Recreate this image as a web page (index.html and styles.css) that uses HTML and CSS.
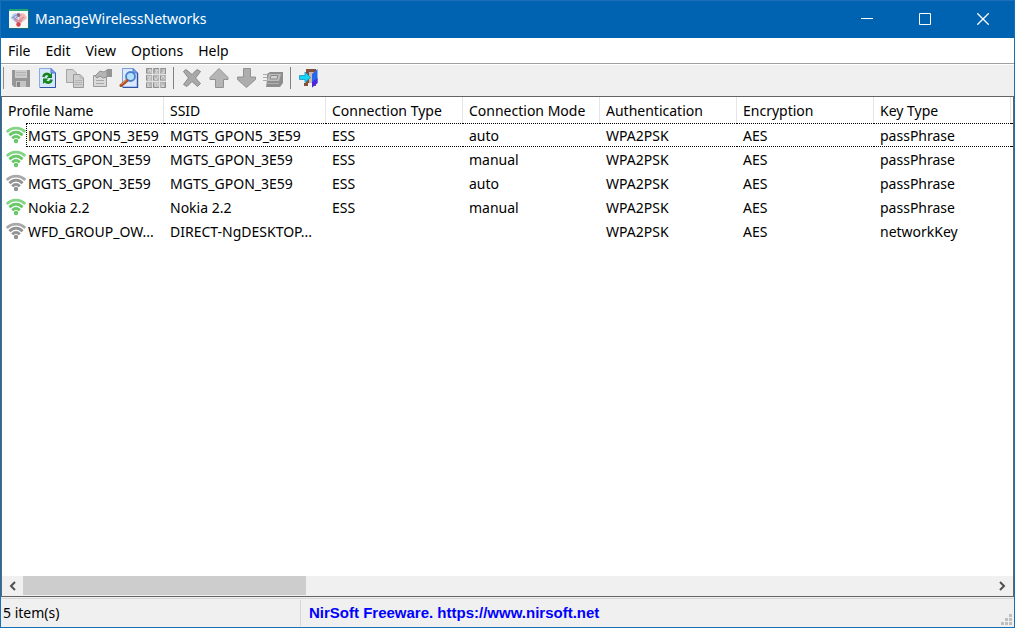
FILE: index.html
```html
<!DOCTYPE html>
<html lang="en">
<head>
    <meta charset="UTF-8">
    <meta name="viewport" content="width=device-width, initial-scale=1.0">
    <title>ManageWirelessNetworks</title>
    <link rel="stylesheet" href="styles.css">
</head>
<body>
    <!-- Shared signal icon, coloured by the row -->
    <svg class="defs" aria-hidden="true">
        <symbol id="wifi" viewBox="0 0 20 18">
            <g fill="none" stroke="currentColor" stroke-width="2.8">
                <path d="M0.8 6C6 0.8 14 0.8 19.2 6" opacity="0.8"/>
                <path d="M3.4 9.2C7.4 5.2 12.6 5.2 16.6 9.2"/>
                <path d="M6.2 12.4C8.6 9.8 11.4 9.8 13.8 12.4"/>
            </g>
            <circle cx="10" cy="15" r="2.2" fill="currentColor"/>
        </symbol>
    </svg>

    <div class="window">
        <header class="titlebar">
            <svg class="app-icon" width="20" height="20" viewBox="0 0 20 20">
                <rect width="20" height="20" fill="#1f6f70"/>
                <rect width="19" height="2" fill="#22a878"/>
                <rect y="2" width="19" height="17" fill="#f6f8f8"/>
                <path d="M1.5 9L4 5L7 4L9.5 7V16L5 12Z" fill="#b9cdf0"/>
                <path d="M18 9L15.500 5L12.500 4L10 7V16L14.500 12Z" fill="#f3b7b0"/>
                <path d="M4 8L9.500 12L15 8M6 11L9.500 14L13 11" fill="none" stroke="#d98a96" stroke-width="1.2"/>
                <path d="M3 9L7 6M5 11L8 8" stroke="#7d98d6"/>
                <circle cx="9.5" cy="6" r="2" fill="#8c6a80"/>
                <circle cx="9.5" cy="15.5" r="2.2" fill="#d8434a"/>
            </svg>
            <h1>ManageWirelessNetworks</h1>
            <div class="window-buttons">
                <button type="button" aria-label="Minimize">
                    <svg width="12" height="12" viewBox="0 0 12 12"><path d="M0 5.5H12"/></svg>
                </button>
                <button type="button" aria-label="Maximize">
                    <svg width="12" height="12" viewBox="0 0 12 12"><path d="M0.5 0.5H11.5V11.5H0.5Z"/></svg>
                </button>
                <button type="button" aria-label="Close">
                    <svg width="12" height="12" viewBox="0 0 12 12"><path d="M0.3 0.3L11.7 11.7M11.7 0.3L0.3 11.7" stroke-width="1.3"/></svg>
                </button>
            </div>
        </header>

        <nav class="menubar">
            <button type="button">File</button>
            <button type="button">Edit</button>
            <button type="button">View</button>
            <button type="button">Options</button>
            <button type="button">Help</button>
        </nav>

        <div class="toolbar" role="toolbar">
            <button type="button" aria-label="Save" disabled>
                <svg width="20" height="20" viewBox="0 0 20 20">
                    <path d="M1 2H19V19H3L1 17Z" fill="#969696"/>
                    <path d="M4 2H16V10H4Z" fill="#cdcdcd"/>
                    <path d="M5 4.5H15M5 7H15" stroke="#b2b2b2"/>
                    <path d="M5 13H15V19H5Z" fill="#c4c4c4"/>
                    <path d="M6 14H9V19H6Z" fill="#858585"/>
                </svg>
            </button>
            <button type="button" aria-label="Refresh">
                <svg width="20" height="20" viewBox="0 0 20 20">
                    <path d="M1.5 0.5H13L17.5 5V19.5H1.5Z" fill="#d6e6fd" stroke="#8aaae6"/>
                    <path d="M17.5 5V19.5H2" fill="none" stroke="#2f55a8"/>
                    <path d="M13 0.5V5H17.5Z" fill="#7da6eb" stroke="#4f7aca"/>
                    <path d="M5.5 9C6 5.5 9.5 5 12 7.500" fill="none" stroke="#13851a" stroke-width="2.6"/>
                    <path d="M14 4.500V10H8.500Z" fill="#13851a"/>
                    <path d="M13.500 11.500C13 15 9.500 15.500 7 13" fill="none" stroke="#13851a" stroke-width="2.6"/>
                    <path d="M5 16V10.500H10.500Z" fill="#13851a"/>
                </svg>
            </button>
            <button type="button" aria-label="Copy" disabled>
                <svg width="20" height="20" viewBox="0 0 20 20">
                    <path d="M1.5 1.5H8L11.5 5V14.5H1.5Z" fill="#d2d2d2" stroke="#a3a3a3"/>
                    <path d="M8.5 6.5H15L18.5 10V19.5H8.5Z" fill="#cfcfcf" stroke="#999"/>
                    <path d="M15 6.5V10H18.5M10 12.5H17M10 14.5H17M10 16.5H17" fill="none" stroke="#b4b4b4"/>
                </svg>
            </button>
            <button type="button" aria-label="Properties" disabled>
                <svg width="20" height="20" viewBox="0 0 20 20">
                    <path d="M1.5 7.5H14.5V18.5H1.5Z" fill="#dadada" stroke="#999"/>
                    <path d="M4 12.5H12M4 15.5H12" stroke="#a6a6a6"/>
                    <path d="M3 8L8 3L12 4L15 2V9L11 10L8 8L5 10Z" fill="#b5b5b5" stroke="#929292"/>
                    <path d="M15 1H20V9H15Z" fill="#959595"/>
                </svg>
            </button>
            <button type="button" aria-label="Find">
                <svg width="20" height="20" viewBox="0 0 20 20">
                    <path d="M3.5 0.5H14L18.5 5V19.5H3.5Z" fill="#dbe9fd" stroke="#789de0"/>
                    <path d="M18.5 5V19.5H4" fill="none" stroke="#2b52a8" stroke-width="1.4"/>
                    <path d="M14 0.5V5H18.5Z" fill="#7da6eb" stroke="#4f7aca"/>
                    <circle cx="11.5" cy="8.5" r="4.5" fill="#b4e2fb" stroke="#4c7ccc" stroke-width="1.8"/>
                    <path d="M8 12.5L2 17.5" stroke="#a84e22" stroke-width="3" stroke-linecap="round"/>
                    <path d="M7.5 12L2 16.5" stroke="#ef9b57"/>
                </svg>
            </button>
            <button type="button" aria-label="Advanced options" disabled>
                <svg width="20" height="20" viewBox="0 0 20 20">
                    <path d="M0 0H20V20H0Z" fill="#b4b4b4"/>
                    <path d="M6.5 0V20M13.5 0V20M0 6.5H20M0 13.5H20" stroke="#e2e2e2"/>
                    <path d="M2 4L4 1L5 5M9 2H12L9 5H12M15 1V5H18V1M1 9H5L2 12H5M8 9L10 12L12 8M15 11L17 8L19 11M2 15V19H5M9 15H12V18H9ZM15 16L18 18L15 19" fill="none" stroke="#dedede"/>
                    <path d="M0.5 5V0.5H6M8 5V0.5H13M15 5V0.5H19.5V6M0.5 12V7.500M7.500 12V8M14.500 12V8M0.5 15V19.500H6M7.500 15V19.500H13M15 19.500H19.500V14" fill="none" stroke="#909090"/>
                </svg>
            </button>
            <span class="separator"></span>
            <button type="button" aria-label="Delete" disabled>
                <svg width="20" height="20" viewBox="0 0 20 20">
                    <path d="M1.5 3.5L4 1.5L10 6.5L15 1.5L18.5 3.5L13.5 10L18.5 15.5L15.5 18.5L10 13.5L5 18.5L1.5 16.5L6.5 10Z" fill="#a9a9a9" stroke="#898989"/>
                </svg>
            </button>
            <button type="button" aria-label="Move up" disabled>
                <svg width="20" height="20" viewBox="0 0 20 20">
                    <path d="M10 0.5L19 9.5V11.5H14.5V19.5H6.5V11.5H1V9.5Z" fill="#b5b5b5" stroke="#929292"/>
                </svg>
            </button>
            <button type="button" aria-label="Move down" disabled>
                <svg width="20" height="20" viewBox="0 0 20 20">
                    <path d="M10.5 19.5L19.5 11.5V9H14.5V0.5H7.5V9H1.5V11.5Z" fill="#adadad" stroke="#929292"/>
                </svg>
            </button>
            <button type="button" aria-label="Connect" disabled>
                <svg width="20" height="20" viewBox="0 0 20 20">
                    <path d="M4 6L7 4H20V15L17 19H3L4 12Z" fill="#8e8e8e"/>
                    <path d="M6 6H18L16 13H4Z" fill="#bcbcbc"/>
                    <path d="M8 7.5H15L14 11H7Z" fill="#d2d2d2" stroke="#8b8b8b"/>
                    <path d="M0 6.5H5M0 9.5H4M0 12.5H4" stroke="#aaa"/>
                    <path d="M4 15.5H16" stroke="#b0b0b0"/>
                </svg>
            </button>
            <span class="separator"></span>
            <button type="button" aria-label="Exit">
                <svg width="20" height="20" viewBox="0 0 20 20">
                    <path d="M6 1H17V18H14V4H10V15H9V18H5V15H7V1Z" fill="#855039"/>
                    <path d="M10 4H15V15H10Z" fill="#c9b8b4"/>
                    <path d="M13 6L18.5 1V15L13 19.5Z" fill="#2668ed"/>
                    <path d="M13 14L18.5 10V15L13 19.5Z" fill="#4b28e0"/>
                    <path d="M0.5 7.5H6V4L11.5 9.5L6 14.5V11.5H0.5Z" fill="#17d5f4" stroke="#1594c6" stroke-width="0.8"/>
                </svg>
            </button>
        </div>

        <main class="list">
            <div class="list-view">
                <table>
                    <colgroup>
                        <col class="col-name">
                        <col class="col-name">
                        <col class="col-info" span="5">
                        <col>
                    </colgroup>
                    <thead>
                        <tr>
                            <th>Profile Name</th>
                            <th>SSID</th>
                            <th>Connection Type</th>
                            <th>Connection Mode</th>
                            <th>Authentication</th>
                            <th>Encryption</th>
                            <th>Key Type</th>
                            <th></th>
                        </tr>
                    </thead>
                    <tbody>
                        <tr class="focused">
                            <td class="profile"><div><svg class="signal on"><use href="#wifi"/></svg><span>MGTS_GPON5_3E59</span></div></td>
                            <td>MGTS_GPON5_3E59</td>
                            <td>ESS</td>
                            <td>auto</td>
                            <td>WPA2PSK</td>
                            <td>AES</td>
                            <td>passPhrase</td>
                            <td></td>
                        </tr>
                        <tr>
                            <td class="profile"><div><svg class="signal on"><use href="#wifi"/></svg><span>MGTS_GPON_3E59</span></div></td>
                            <td>MGTS_GPON_3E59</td>
                            <td>ESS</td>
                            <td>manual</td>
                            <td>WPA2PSK</td>
                            <td>AES</td>
                            <td>passPhrase</td>
                            <td></td>
                        </tr>
                        <tr>
                            <td class="profile"><div><svg class="signal"><use href="#wifi"/></svg><span>MGTS_GPON_3E59</span></div></td>
                            <td>MGTS_GPON_3E59</td>
                            <td>ESS</td>
                            <td>auto</td>
                            <td>WPA2PSK</td>
                            <td>AES</td>
                            <td>passPhrase</td>
                            <td></td>
                        </tr>
                        <tr>
                            <td class="profile"><div><svg class="signal on"><use href="#wifi"/></svg><span>Nokia 2.2</span></div></td>
                            <td>Nokia 2.2</td>
                            <td>ESS</td>
                            <td>manual</td>
                            <td>WPA2PSK</td>
                            <td>AES</td>
                            <td>passPhrase</td>
                            <td></td>
                        </tr>
                        <tr>
                            <td class="profile"><div><svg class="signal"><use href="#wifi"/></svg><span>WFD_GROUP_OW...</span></div></td>
                            <td>DIRECT-NgDESKTOP...</td>
                            <td></td>
                            <td></td>
                            <td>WPA2PSK</td>
                            <td>AES</td>
                            <td>networkKey</td>
                            <td></td>
                        </tr>
                    </tbody>
                </table>
            </div>
            <div class="scrollbar">
                <button type="button" aria-label="Scroll left">
                    <svg width="8" height="10" viewBox="0 0 8 10"><path d="M6 1L2 5L6 9"/></svg>
                </button>
                <div class="track"><div class="thumb"></div></div>
                <button type="button" aria-label="Scroll right">
                    <svg width="8" height="10" viewBox="0 0 8 10"><path d="M1 1L5 5L1 9"/></svg>
                </button>
            </div>
        </main>

        <footer class="statusbar">
            <span class="count">5 item(s)</span>
            <a href="https://www.nirsoft.net">NirSoft Freeware. https://www.nirsoft.net</a>
            <svg class="grip" width="11" height="11" viewBox="0 0 11 11">
                <path d="M8 0H11V3H8ZM4 4H7V7H4ZM8 4H11V7H8ZM0 8H3V11H0ZM4 8H7V11H4ZM8 8H11V11H8Z" fill="#bfbfbf"/>
            </svg>
        </footer>
    </div>
</body>
</html>
```
FILE: styles.css
```css
* {
    box-sizing: border-box;
}

body {
    margin: 0;
    font-family: "Segoe UI", "Noto Sans", "Open Sans", sans-serif;
    font-size: 14px;
    line-height: 20px;
    color: #000;
}

button {
    padding: 0;
    border: none;
    background: none;
    font: inherit;
    color: inherit;
}

svg {
    display: block;
}

.defs {
    position: absolute;
    width: 0;
    height: 0;
}

.window {
    display: flex;
    flex-direction: column;
    height: 100vh;
    border: 1px solid #176fb5;
    border-top: none;
    background: #f0f0f0;
}

/* Title bar */
.titlebar {
    display: flex;
    align-items: center;
    height: 38px;
    padding: 0 2px 2px 8px;
    border-top: 1px solid #1b70b8;
    background: #0063b1;
    color: #fff;
}

.titlebar h1 {
    flex: 1;
    margin: 0 0 0 6px;
    font-size: 14px;
    font-weight: normal;
}

.window-buttons {
    display: flex;
    height: 100%;
}

.window-buttons button {
    display: flex;
    align-items: center;
    justify-content: center;
    width: 58px;
}

.window-buttons path {
    fill: none;
    stroke: #fff;
}

/* Menu */
.menubar {
    display: flex;
    gap: 15px;
    height: 25px;
    padding: 0 7px;
    background: #fff;
}

/* Toolbar */
.toolbar {
    display: flex;
    align-items: center;
    height: 33px;
    padding: 0 0 4px 2px;
    border-top: 1px solid #a0a0a0;
    box-shadow: inset 0 1px #fff;
}

.toolbar::before {
    content: "";
    width: 1px;
    height: 22px;
    margin-right: 3px;
    background: #8c8c8c;
}

.toolbar button {
    display: flex;
    align-items: center;
    justify-content: center;
    width: 27px;
    height: 28px;
}

.separator {
    width: 1px;
    height: 22px;
    margin: 0 4px;
    background: #808080;
}

/* Profile list */
.list {
    display: flex;
    flex: 1;
    flex-direction: column;
    min-height: 0;
    border: 1px solid #646464;
    background: #fff;
}

.list-view {
    flex: 1;
    min-height: 0;
    overflow: hidden;
}

table {
    width: 100%;
    table-layout: fixed;
    border-spacing: 0;
}

.col-name {
    width: 162px;
}

.col-info {
    width: 137px;
}

th,
td {
    padding: 2px 0 0 6px;
    text-align: left;
    font-weight: normal;
    white-space: nowrap;
}

th {
    height: 26px;
    border-right: 1px solid #e5e5e5;
}

th:last-child {
    border-right: none;
}

td {
    height: 24px;
}

td.profile {
    padding: 0 0 0 4px;
}

.profile div {
    display: flex;
    align-items: center;
}

.profile span {
    flex: 1;
    height: 24px;
    padding: 3px 0 0 2px;
}

.focused td:not(.profile) {
    border: dotted #000;
    border-width: 1px 0;
}

.focused .profile span {
    padding: 2px 0 0 1px;
    border: 1px dotted #000;
    border-right: none;
}

.signal {
    width: 20px;
    height: 18px;
    color: #929292;
}

.signal.on {
    color: #66c966;
}

/* Scroll bar */
.scrollbar {
    display: flex;
    height: 20px;
    background: #f0f0f0;
}

.scrollbar button {
    display: flex;
    align-items: center;
    justify-content: center;
    width: 21px;
}

.scrollbar path {
    fill: none;
    stroke: #505050;
    stroke-width: 2;
}

.track {
    flex: 1;
}

.thumb {
    width: 29.2%;
    height: 19px;
    background: #cdcdcd;
}

/* Status bar */
.statusbar {
    display: flex;
    position: relative;
    align-items: center;
    height: 29px;
    margin-top: 1px;
    border-top: 1px solid #d7d7d7;
}

.count {
    width: 300px;
    height: 26px;
    padding: 3px 2px;
    border-right: 1px solid #d7d7d7;
}

.statusbar a {
    padding-left: 8px;
    font-family: "Liberation Sans", Arial, sans-serif;
    font-size: 15px;
    font-weight: bold;
    color: #0000ff;
    text-decoration: none;
}

.grip {
    position: absolute;
    right: 2px;
    bottom: 2px;
}
```
